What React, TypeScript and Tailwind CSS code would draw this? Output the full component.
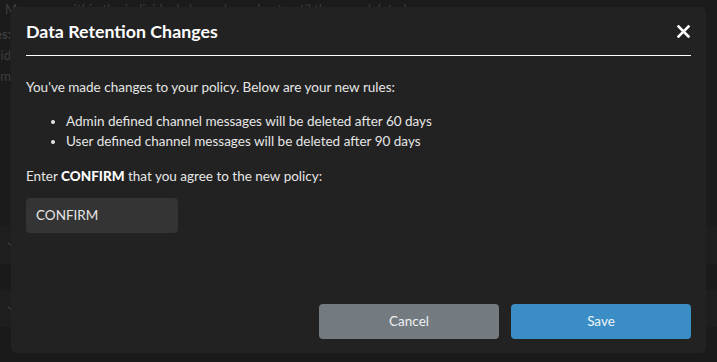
import React from "react";

function Chevron() {
  return (
    <svg width="12" height="8" viewBox="0 0 12 8" fill="none" stroke="#3a3a3a" strokeWidth="1.3">
      <path d="M1 1.5 L6 6 L11 1.5" />
    </svg>
  );
}

export default function App() {
  return (
    <div
      className="relative h-[362px] w-[717px] overflow-hidden bg-[#1b1b1b] text-white"
      style={{ fontFamily: "Lato, 'Open Sans', sans-serif" }}
    >
      {/* background page (dimmed, mostly covered by the modal) */}
      <div className="flex h-full flex-col text-[13px] text-[#3d3d3d]">
        <div className="h-[18px] pl-[5px] pt-[2px] leading-[14px] whitespace-nowrap">
          Messages within the individual channels are kept until they are deleted.
        </div>
        <div className="flex w-[11px] flex-col overflow-hidden">
          <div className="mt-[7px] flex h-[18px] justify-end font-bold whitespace-nowrap">es:</div>
          <div className="mt-[3px] flex h-[18px] justify-end whitespace-nowrap">id</div>
          <div className="mt-[3px] flex h-[18px] justify-end whitespace-nowrap">m</div>
        </div>
        <div className="h-[141px]" />
        <div className="flex h-[38px] items-center bg-[#1e1e1e] pl-[7px]">
          <Chevron />
        </div>
        <div className="h-[26px] bg-[#1a1a1a]" />
        <div className="flex h-[37px] items-center bg-[#1e1e1e] pl-[7px]">
          <Chevron />
        </div>
        <div className="flex-1 bg-[#1a1a1a]" />
      </div>

      {/* modal */}
      <div className="absolute left-[11px] top-[7px] flex h-[346px] w-[695px] flex-col rounded-[5px] bg-[#222222] px-[15px] pb-[14px]">
        <div className="flex h-[49px] items-center justify-between border-b border-white">
          <h2 className="pt-[1px] text-[17.8px] font-bold text-white">Data Retention Changes</h2>
          <svg width="13" height="13" viewBox="0 0 13 13" className="mr-[1px]">
            <path d="M1.5 1.5 L11.5 11.5 M11.5 1.5 L1.5 11.5" stroke="white" strokeWidth="2.6" strokeLinecap="square" />
          </svg>
        </div>
        <p className="mt-[22px] text-[13.5px] leading-[18px] text-[#e6e6e6]">
          You've made changes to your policy. Below are your new rules:
        </p>
        <ul className="mt-[16px] flex list-disc flex-col gap-[2px] pl-[40px] text-[13.5px] leading-[18px] text-[#e6e6e6]">
          <li>Admin defined channel messages will be deleted after 60 days</li>
          <li>User defined channel messages will be deleted after 90 days</li>
        </ul>
        <p className="mt-[17px] text-[13.5px] leading-[18px] text-[#e6e6e6]">
          Enter <span className="font-black text-white">CONFIRM</span> that you agree to the new policy:
        </p>
        <div className="mt-[13px] flex h-[35px] w-[152px] items-center rounded-[4px] bg-[#343434] px-[10px] text-[13.5px] text-[#e6e6e6]">
          CONFIRM
        </div>
        <div className="mt-auto flex justify-end gap-[12px]">
          <button className="h-[35px] w-[180px] rounded-[4px] bg-[#737b80] text-[13.5px] text-[#eef0f1]">Cancel</button>
          <button className="h-[35px] w-[180px] rounded-[4px] bg-[#3b8dc5] text-[13.5px] text-[#eef4f9]">Save</button>
        </div>
      </div>
    </div>
  );
}
